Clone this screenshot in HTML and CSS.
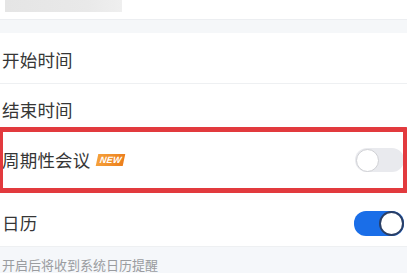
FILE: index.html
```html
<!DOCTYPE html>
<html lang="zh-CN">
<head>
<meta charset="utf-8">
<link rel="stylesheet" href="styles.css">
</head>
<body>
<div class="page">
  <div class="header"><div class="placeholder"></div></div>
  <div class="band"></div>
  <div class="row row-first"><span class="label">开始时间</span></div>
  <div class="row row-second"><span class="label">结束时间</span></div>
  <div class="row row-third">
    <span class="label">周期性会议</span><span class="badge"><i>NEW</i></span>
    <span class="switch"><span class="knob"></span></span>
  </div>
  <div class="row row-fourth">
    <span class="label">日历</span>
    <span class="switch on"><span class="knob"></span></span>
  </div>
  <div class="footer">开启后将收到系统日历提醒</div>
  <div class="highlight"></div>
</div>
</body>
</html>
```
FILE: styles.css
```css
* { box-sizing: border-box; }
html, body { margin: 0; padding: 0; background: #fff; }
body { font-family: "Noto Sans CJK SC", "Noto Sans", sans-serif; color: #333; }
.page { position: relative; width: 407px; height: 273px; overflow: hidden; }
.header { height: 20px; border-bottom: 1px solid #eceef1; padding-left: 5px; }
.placeholder { width: 117px; height: 12px; background: linear-gradient(90deg, #e5e5e5, #e9e9e9 70%, #efefef); }
.band { height: 13px; background: #f5f7f9; }
.row { display: flex; align-items: center; padding-left: 2px; padding-right: 3px; background: #fff; }
.label { font-size: 17.5px; line-height: 22px; letter-spacing: 0.2px; color: #363636; }
.row-first { height: 51px; border-bottom: 1px solid #eef0f2; padding-top: 4px; }
.row-second { height: 50px; padding-top: 2px; }
.row-third { height: 52px; }
.row-fourth { height: 61px; padding-top: 14px; border-bottom: 1px solid #eef0f2; }
.badge { margin-left: 6px; width: 27px; height: 12px; background: linear-gradient(90deg, #f5a03a, #ec7f1c); transform: skewX(-12deg); display: flex; align-items: center; justify-content: center; }
.badge i { font-family: "Liberation Sans", sans-serif; font-size: 9px; font-weight: bold; color: #fff; transform: skewX(4deg); letter-spacing: 0.2px; }
.switch { margin-left: auto; width: 49px; height: 24px; border-radius: 12px; background: #e9eaee; position: relative; display: flex; align-items: center; padding: 0 1px; }
.switch .knob { width: 23px; height: 23px; border-radius: 50%; background: #fff; border: 1.5px solid #cfd0d4; }
.switch.on { background: #1a6ee8; justify-content: flex-end; width: 50px; height: 25px; }
.switch.on .knob { border: 2px solid #2a3f66; width: 25px; height: 25px; margin-right: -1px; }
.footer { height: 28px; background: #f5f7fa; font-size: 13px; color: #9a9ca0; padding-left: 2px; padding-top: 9px; line-height: 18px; }
.highlight { position: absolute; left: -2px; right: -1px; top: 127px; height: 66px; border: 5px solid #e23a3e; border-radius: 2px; }
```
